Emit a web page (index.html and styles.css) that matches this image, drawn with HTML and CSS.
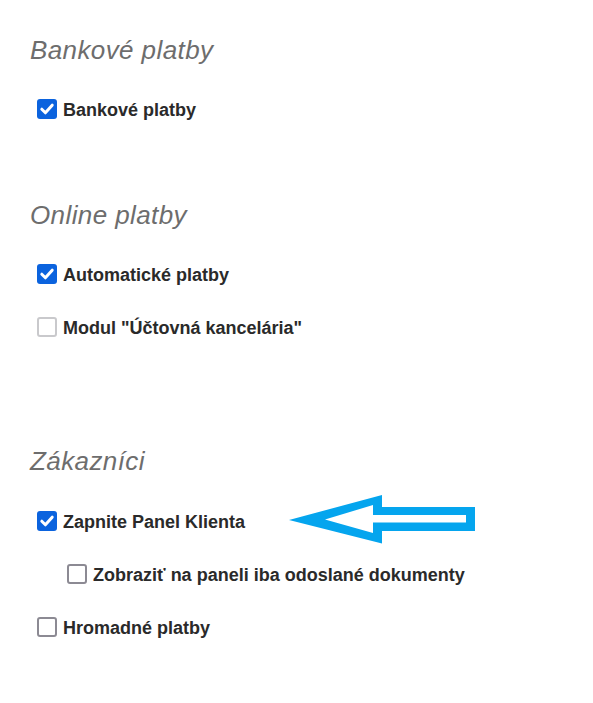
FILE: index.html
```html
<!DOCTYPE html>
<html lang="sk">
<head>
<meta charset="utf-8">
<link rel="stylesheet" href="styles.css">
</head>
<body>
<div class="page">
  <section class="section section-first">
    <h2 class="heading">Bankové platby</h2>
    <div class="rows">
      <label class="row"><span class="box box-checked"><svg viewBox="0 0 20 20" class="tick"><path d="M4.8 10.2 L8.4 13.8 L15.2 6.2"/></svg></span><span class="text">Bankové platby</span></label>
    </div>
  </section>
  <section class="section section-second">
    <h2 class="heading">Online platby</h2>
    <div class="rows">
      <label class="row"><span class="box box-checked"><svg viewBox="0 0 20 20" class="tick"><path d="M4.8 10.2 L8.4 13.8 L15.2 6.2"/></svg></span><span class="text">Automatické platby</span></label>
      <label class="row"><span class="box box-light"></span><span class="text">Modul "Účtovná kancelária"</span></label>
    </div>
  </section>
  <section class="section section-third">
    <h2 class="heading">Zákazníci</h2>
    <div class="rows">
      <label class="row row-annotated"><span class="box box-checked"><svg viewBox="0 0 20 20" class="tick"><path d="M4.8 10.2 L8.4 13.8 L15.2 6.2"/></svg></span><span class="text">Zapnite Panel Klienta</span>
        <svg class="arrow" width="190" height="52" viewBox="0 0 190 52"><path fill-rule="evenodd" d="M0 25 L93 0 L93 12 L186 12 L186 36 L93 36 L93 48.5 Z M36 24.5 L84 10 L84 20 L177 20 L177 27.5 L84 27.5 L84 38 Z"/></svg>
      </label>
      <label class="row row-nested"><span class="box box-dark"></span><span class="text">Zobraziť na paneli iba odoslané dokumenty</span></label>
      <label class="row"><span class="box box-dark"></span><span class="text">Hromadné platby</span></label>
    </div>
  </section>
</div>
</body>
</html>
```

FILE: styles.css
```css
* { box-sizing: border-box; }
html, body {
  margin: 0;
  padding: 0;
  background: #ffffff;
}
.page {
  width: 593px;
  height: 703px;
  padding: 35px 0 0 30px;
  font-family: "Liberation Sans", Arial, sans-serif;
}
.section-second { margin-top: 80px; }
.section-third { margin-top: 108px; }
.heading {
  margin: 0;
  font-size: 26px;
  line-height: 30px;
  font-style: italic;
  font-weight: normal;
  letter-spacing: 0.4px;
  color: #6d6d6d;
}
.rows {
  display: flex;
  flex-direction: column;
  gap: 33px;
  margin-top: 35px;
  padding-left: 7px;
}
.section-third .rows { margin-top: 36px; }
.row {
  position: relative;
  display: flex;
  align-items: flex-start;
  gap: 6px;
  height: 20px;
  font-size: 18px;
  line-height: 20px;
  font-weight: bold;
  color: #2a2a2a;
}
.row-nested { padding-left: 30px; }
.box {
  flex: none;
  width: 20px;
  height: 20px;
  margin-top: -1px;
  border-radius: 3px;
  display: flex;
  align-items: center;
  justify-content: center;
}
.box-checked { background: #0b63de; }
.box-light { border: 2px solid #c9c9cc; }
.box-dark { border: 2px solid #8c8a93; }
.tick {
  width: 20px;
  height: 20px;
}
.tick path {
  fill: none;
  stroke: #ffffff;
  stroke-width: 3;
  stroke-linecap: round;
  stroke-linejoin: round;
}
.arrow {
  position: absolute;
  left: 252px;
  top: -17px;
}
.arrow path { fill: #05a5ee; }
```
